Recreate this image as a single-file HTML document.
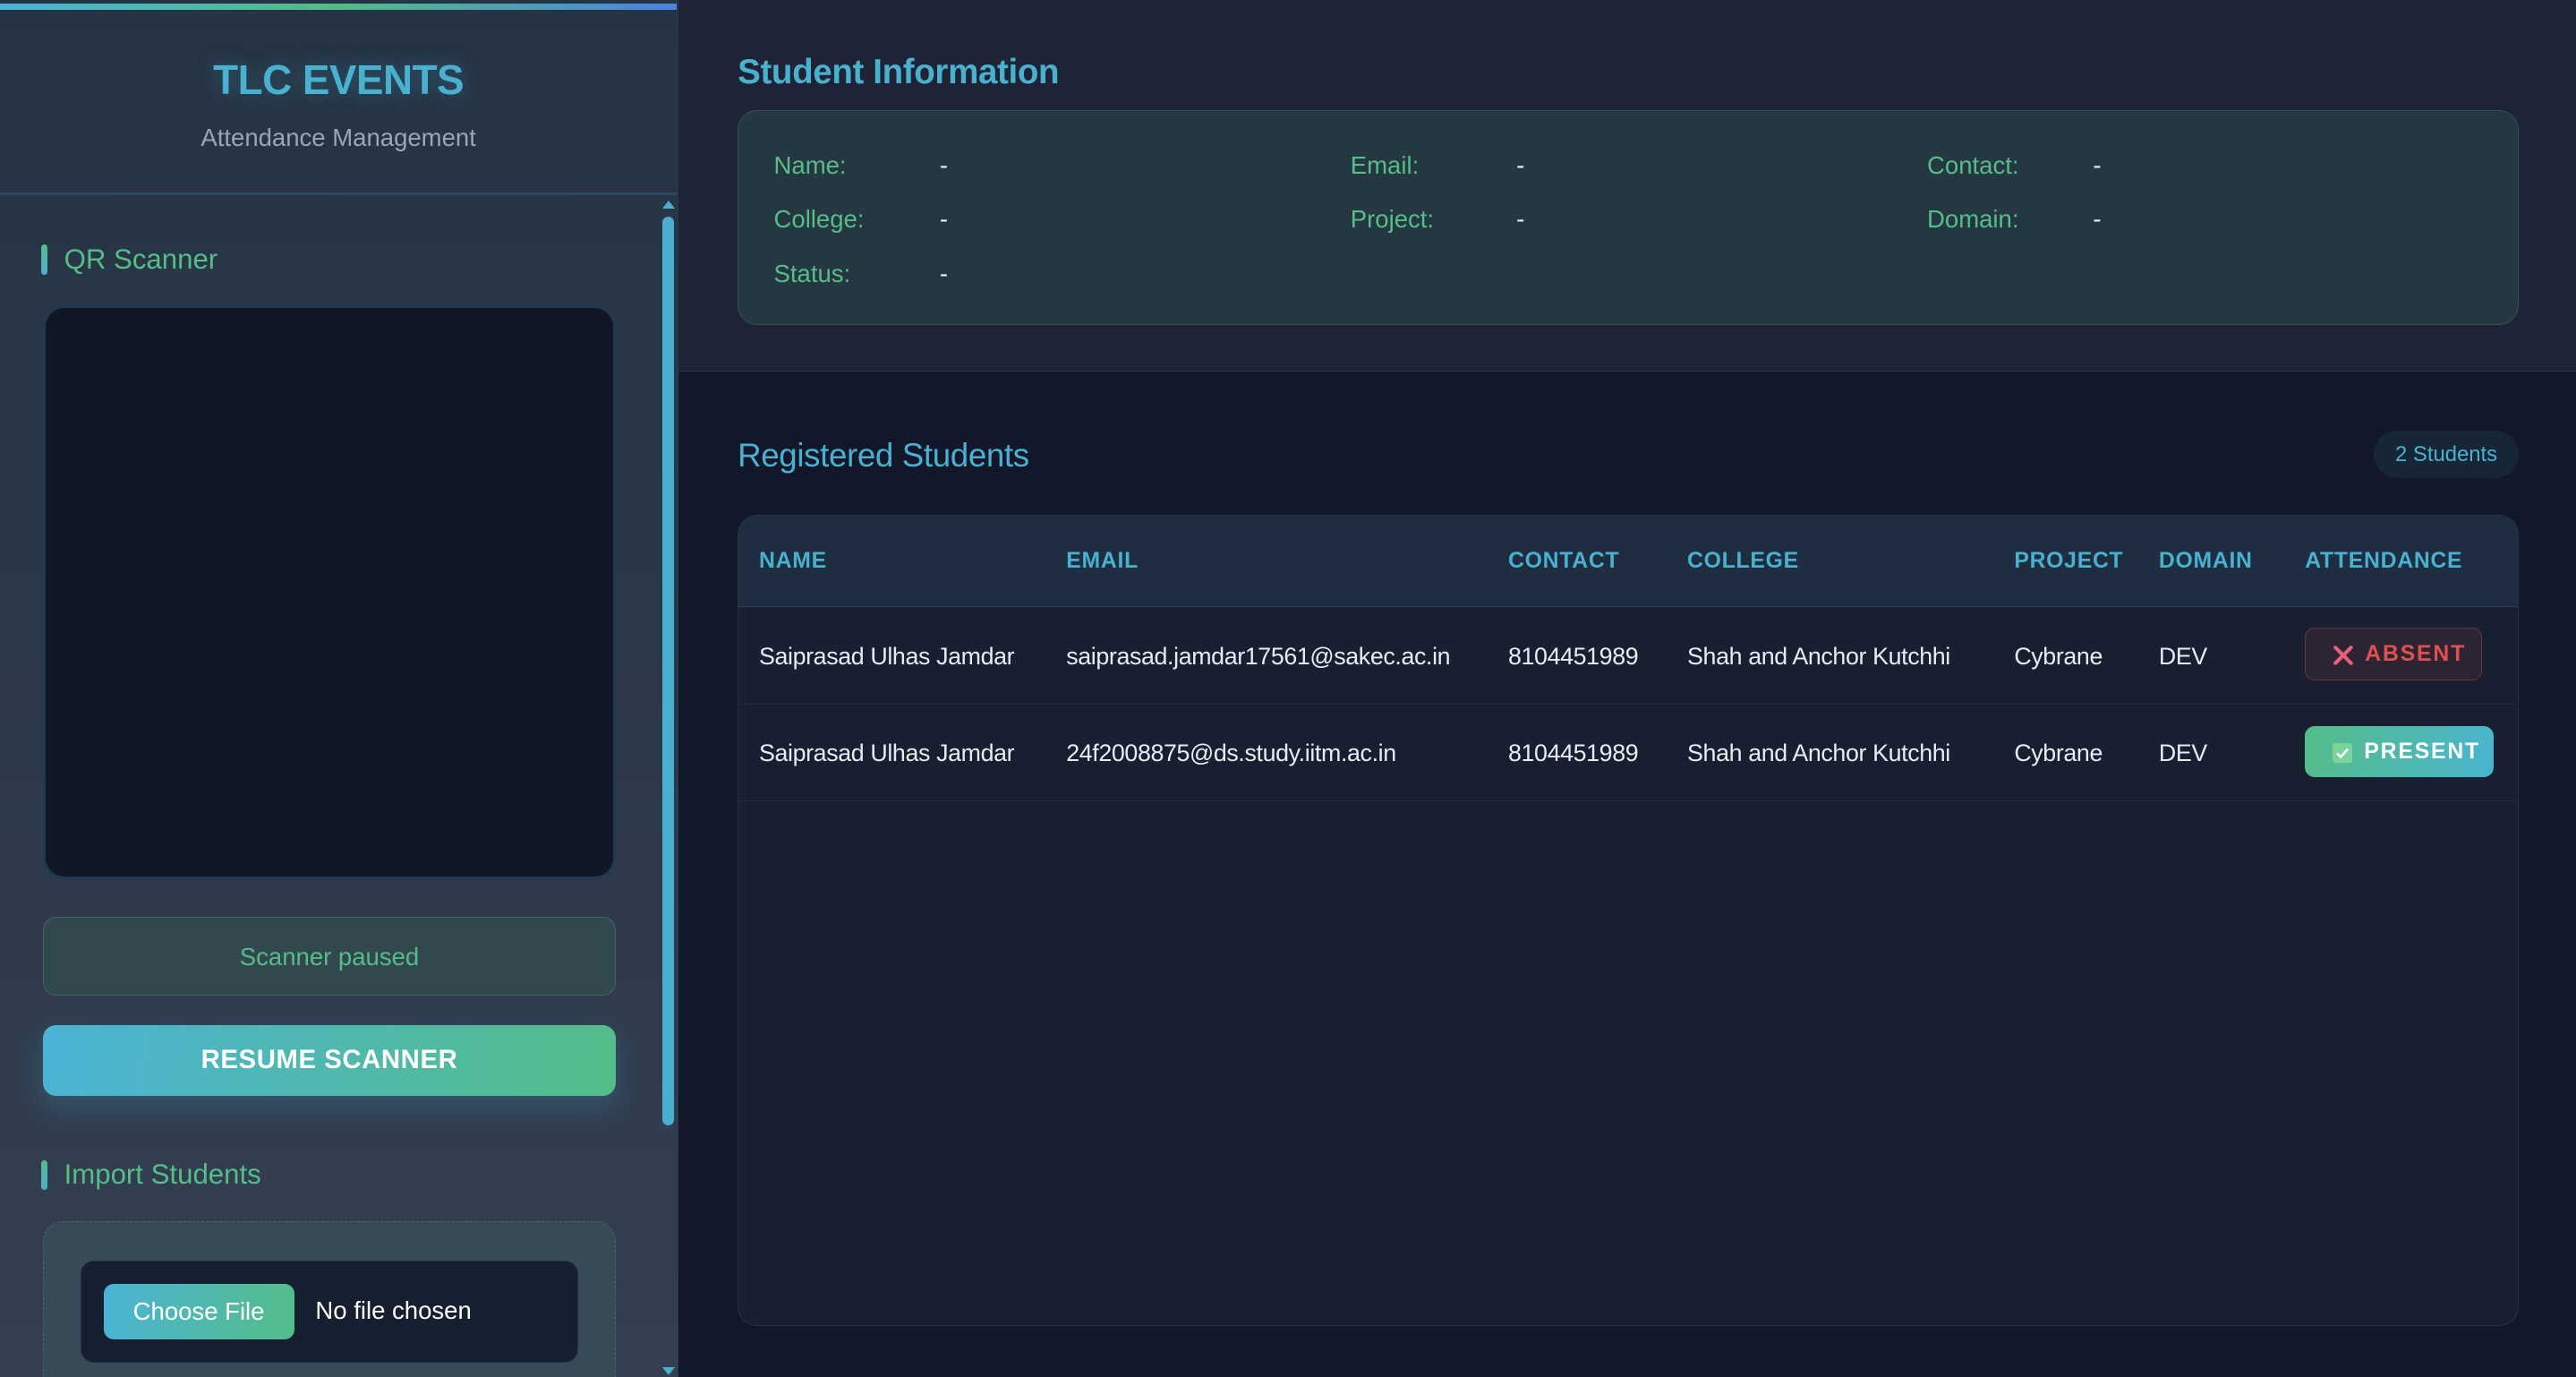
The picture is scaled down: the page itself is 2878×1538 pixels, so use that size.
<!DOCTYPE html>
<html><head><meta charset="utf-8"><style>
*{box-sizing:border-box;margin:0;padding:0}
html,body{width:2878px;height:1538px;overflow:hidden;background:#121829}
#root{zoom:1.8355;width:1568px;height:838px;position:relative;font-family:"Liberation Sans",sans-serif;overflow:hidden}
.abs{position:absolute}
#side{left:0;top:0;width:413px;height:838px;background:linear-gradient(180deg,#253444 0%,#2a3748 40%,#343f51 100%);border-right:1px solid #2a3a4c}
#topbar{left:0;top:2px;width:412px;height:4px;background:linear-gradient(90deg,#4ab4d6,#52bc86 50%,#4a84e0)}
#hdr{left:0;top:6px;width:412px;height:113px;border-bottom:2px solid #2b4a60;text-align:center}
.h{color:#4ab0d0}
.sec{font-size:17px;color:#55bd88}
.bar{width:4px;height:18px;border-radius:2px;background:linear-gradient(#55bd88,#4ab0d0)}
#main1{left:413px;top:0;width:1155px;height:226px;background:#1e2336;border-bottom:1px solid #2a3a4c}
.lab{font-size:15px;color:#55bd88}
.val{font-size:15px;color:#e8ecf2}
.th{font-size:13.5px;color:#4ab0d0;font-weight:bold;letter-spacing:.4px;top:334px}
.td{font-size:14.6px;color:#e8ecf2;letter-spacing:-.2px}
</style></head><body><div id="root">
<div id="side" class="abs"></div>
<div id="topbar" class="abs"></div>
<div id="hdr" class="abs">
<div class="h" style="margin-top:28px;font-size:25px;font-weight:bold;letter-spacing:-.3px;text-shadow:0 0 12px rgba(74,176,208,.35)">TLC EVENTS</div>
<div style="margin-top:12px;font-size:15px;color:#9aa5b8">Attendance Management</div>
</div>
<div class="abs" style="left:403px;top:122px;width:0;height:0;border-left:4px solid transparent;border-right:4px solid transparent;border-bottom:5px solid #4aaed0"></div>
<div class="abs" style="left:403px;top:132px;width:7px;height:553px;border-radius:4px;background:#4aaed0"></div>
<div class="abs" style="left:403px;top:832px;width:0;height:0;border-left:4px solid transparent;border-right:4px solid transparent;border-top:5px solid #4aaed0"></div>

<div class="abs bar" style="left:25px;top:149px"></div>
<div class="abs sec" style="left:39px;top:148px">QR Scanner</div>
<div class="abs" style="left:26px;top:186px;width:349px;height:349px;background:#111727;border:2px solid #1f3a50;border-radius:13px"></div>
<div class="abs" style="left:26px;top:558px;width:349px;height:48px;background:#33474f;border:1px solid #3a6a5a;border-radius:8px;text-align:center;line-height:48px;font-size:15px;color:#55bd88">Scanner paused</div>
<div class="abs" style="left:26px;top:624px;width:349px;height:43px;background:linear-gradient(100deg,#4bb4d6,#55bd88);border-radius:8px;text-align:center;line-height:43px;font-size:16px;color:#fff;font-weight:bold;letter-spacing:.3px;box-shadow:0 6px 18px rgba(74,176,208,.25)">RESUME SCANNER</div>
<div class="abs bar" style="left:25px;top:706px"></div>
<div class="abs sec" style="left:39px;top:705px">Import Students</div>
<div class="abs" style="left:26px;top:743px;width:349px;height:110px;background:#384a56;border:1px dashed #3f6a5c;border-radius:12px"></div>
<div class="abs" style="left:49px;top:767px;width:303px;height:62px;background:#161f30;border:1px solid #1f3448;border-radius:8px"></div>
<div class="abs" style="left:63px;top:781px;width:116px;height:34px;background:linear-gradient(100deg,#4bb4d6,#55bd88);border-radius:6px;text-align:center;line-height:34px;color:#fff;font-size:15px">Choose File</div>
<div class="abs" style="left:192px;top:789px;color:#fff;font-size:15px">No file chosen</div>

<div id="main1" class="abs"></div>
<div class="abs h" style="left:449px;top:32px;font-size:21px;font-weight:bold;letter-spacing:-.2px">Student Information</div>
<div class="abs" style="left:449px;top:67px;width:1084px;height:131px;background:#253740;border:1px solid #2e5550;border-radius:12px"></div>
<div class="abs lab" style="left:471px;top:92px">Name:</div><div class="abs val" style="left:572px;top:92px">-</div>
<div class="abs lab" style="left:822px;top:92px">Email:</div><div class="abs val" style="left:923px;top:92px">-</div>
<div class="abs lab" style="left:1173px;top:92px">Contact:</div><div class="abs val" style="left:1274px;top:92px">-</div>
<div class="abs lab" style="left:471px;top:125px">College:</div><div class="abs val" style="left:572px;top:125px">-</div>
<div class="abs lab" style="left:822px;top:125px">Project:</div><div class="abs val" style="left:923px;top:125px">-</div>
<div class="abs lab" style="left:1173px;top:125px">Domain:</div><div class="abs val" style="left:1274px;top:125px">-</div>
<div class="abs lab" style="left:471px;top:158px">Status:</div><div class="abs val" style="left:572px;top:158px">-</div>

<div class="abs h" style="left:449px;top:266px;font-size:20px;letter-spacing:-.2px">Registered Students</div>
<div class="abs" style="left:1445px;top:262px;width:88px;height:29px;background:#172636;border-radius:15px;text-align:center;line-height:29px;font-size:13px;color:#4ab0d0">2 Students</div>
<div class="abs" style="left:449px;top:313px;width:1084px;height:494px;background:#181f30;border:1px solid #22354a;border-radius:12px;overflow:hidden">
<div style="height:56px;background:#1e2e40;border-bottom:1px solid #22435a"></div>
<div style="height:59px;border-bottom:1px solid #222a3a"></div>
<div style="height:59px;border-bottom:1px solid #222a3a"></div>
</div>
<div class="abs th" style="left:462px">NAME</div>
<div class="abs th" style="left:649px">EMAIL</div>
<div class="abs th" style="left:918px">CONTACT</div>
<div class="abs th" style="left:1027px">COLLEGE</div>
<div class="abs th" style="left:1226px">PROJECT</div>
<div class="abs th" style="left:1314px">DOMAIN</div>
<div class="abs th" style="left:1403px">ATTENDANCE</div>

<div class="abs td" style="left:462px;top:391px">Saiprasad Ulhas Jamdar</div>
<div class="abs td" style="left:649px;top:391px">saiprasad.jamdar17561@sakec.ac.in</div>
<div class="abs td" style="left:918px;top:391px">8104451989</div>
<div class="abs td" style="left:1027px;top:391px">Shah and Anchor Kutchhi</div>
<div class="abs td" style="left:1226px;top:391px">Cybrane</div>
<div class="abs td" style="left:1314px;top:391px">DEV</div>
<div class="abs" style="left:1403px;top:382px;width:108px;height:32px;background:#2d2433;border:1px solid #6a3440;border-radius:6px;font-size:13.5px;font-weight:bold;color:#e05050;letter-spacing:1px;line-height:32px;padding-left:36px">ABSENT</div>
<svg class="abs" style="left:1420px;top:392px" width="13" height="13" viewBox="0 0 15 15"><path d="M2 2L13 13M13 2L2 13" stroke="#e8607a" stroke-width="2.6" stroke-linecap="round"/></svg>

<div class="abs td" style="left:462px;top:450px">Saiprasad Ulhas Jamdar</div>
<div class="abs td" style="left:649px;top:450px">24f2008875@ds.study.iitm.ac.in</div>
<div class="abs td" style="left:918px;top:450px">8104451989</div>
<div class="abs td" style="left:1027px;top:450px">Shah and Anchor Kutchhi</div>
<div class="abs td" style="left:1226px;top:450px">Cybrane</div>
<div class="abs td" style="left:1314px;top:450px">DEV</div>
<div class="abs" style="left:1403px;top:442px;width:115px;height:31px;background:linear-gradient(100deg,#55bd88,#4ab4d0);border-radius:6px;font-size:13.5px;font-weight:bold;color:#fff;letter-spacing:1px;line-height:32px;padding-left:36px">PRESENT</div>
<svg class="abs" style="left:1420px;top:452px" width="12" height="12" viewBox="0 0 13 13"><rect width="13" height="13" rx="1.5" fill="#7ad39a"/><path d="M3 6.8L5.4 9.2L10 4" stroke="#fff" stroke-width="1.6" fill="none"/></svg>
</div></body></html>
